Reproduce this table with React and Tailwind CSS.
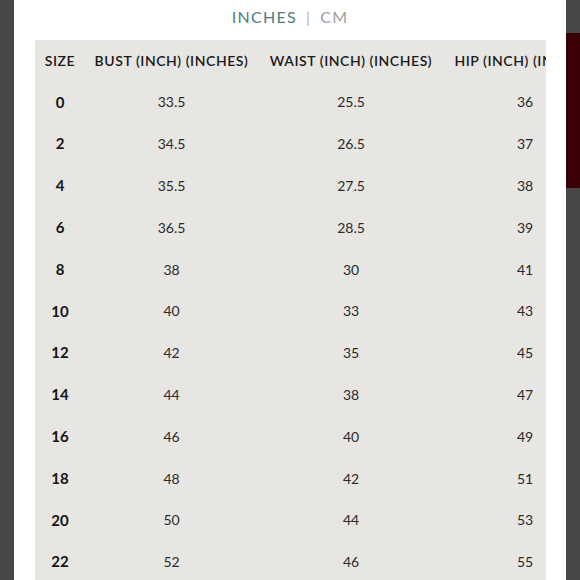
import React from 'react';

const rows = [
  ['0', '33.5', '25.5', '36'],
  ['2', '34.5', '26.5', '37'],
  ['4', '35.5', '27.5', '38'],
  ['6', '36.5', '28.5', '39'],
  ['8', '38', '30', '41'],
  ['10', '40', '33', '43'],
  ['12', '42', '35', '45'],
  ['14', '44', '38', '47'],
  ['16', '46', '40', '49'],
  ['18', '48', '42', '51'],
  ['20', '50', '44', '53'],
  ['22', '52', '46', '55'],
];

const cols = 'grid grid-cols-[50px_173px_186px_162px] w-[571px]';

export default function App() {
  return (
    <div className="flex w-[580px] h-[580px] overflow-hidden bg-[#474747] font-['Lato',sans-serif]">
      <div className="w-[14px] shrink-0" />

      <div className="w-[552px] shrink-0 bg-white flex flex-col">
        <div className="h-[40px] flex items-start justify-center pt-[5px] text-[16px] tracking-[0.08em]">
          <span className="text-[#4e7c7a]">INCHES</span>
          <span className="text-[#b5b5b5] mx-[9px]">|</span>
          <span className="text-[#a0a0a0]">CM</span>
        </div>

        <div className="ml-[21px] w-[511px] flex-1 bg-[#e8e6e2] overflow-hidden">
          <div className={`${cols} h-[41px] items-center text-[14px] tracking-[0.04em] font-semibold text-[#1a1a1a] whitespace-nowrap`}>
            <div className="text-center">SIZE</div>
            <div className="text-center">BUST (INCH) (INCHES)</div>
            <div className="text-center">WAIST (INCH) (INCHES)</div>
            <div className="text-center">HIP (INCH) (INCHES)</div>
          </div>
          {rows.map((r) => (
            <div key={r[0]} className={`${cols} h-[41.8px] items-center text-[14px] text-[#2a2a2a]`}>
              <div className="text-center font-bold text-[#151515] text-[15px]">{r[0]}</div>
              <div className="text-center">{r[1]}</div>
              <div className="text-center">{r[2]}</div>
              <div className="text-center">{r[3]}</div>
            </div>
          ))}
        </div>
      </div>

      <div className="w-[14px] shrink-0 flex flex-col">
        <div className="h-[33px]" />
        <div className="h-[155px] bg-[#3a0005]" />
      </div>
    </div>
  );
}
